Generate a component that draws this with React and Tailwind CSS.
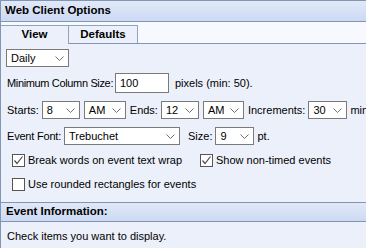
import React from "react";

function Chevron() {
    return (
        <svg width="9" height="5" viewBox="0 0 9 5" className="shrink-0">
            <polyline points="0.5,0.5 4.5,4.5 8.5,0.5" fill="none" stroke="#707070" strokeWidth="1" />
        </svg>
    );
}

function Select({ value, w }) {
    return (
        <div className={`flex items-center justify-between h-[18px] border border-[#7a7a7a] bg-white pl-[4px] pr-[4px] shrink-0 ${w}`}>
            <span>{value}</span>
            <Chevron />
        </div>
    );
}

function Check({ checked, label }) {
    return (
        <div className="flex items-center">
            <div className="w-[13px] h-[13px] border border-[#555] bg-white flex items-center justify-center shrink-0">
                {checked && (
                    <svg width="11" height="11" viewBox="0 0 11 11">
                        <polyline points="1.5,5.5 4,8.5 9.5,1.5" fill="none" stroke="#4a4a4a" strokeWidth="1.2" />
                    </svg>
                )}
            </div>
            <span className="ml-[3px] whitespace-nowrap">{label}</span>
        </div>
    );
}

export default function App() {
    return (
        <div className="w-[366px] h-[248px] overflow-hidden bg-[#ecf0fb] border-l border-[#8196b5] font-['Liberation_Sans',Arial,sans-serif] text-[11px] text-black leading-none">
            {/* titre */}
            <div className="h-[22px] border-y border-[#8196b5] bg-gradient-to-b from-[#e1e9f8] to-[#ccd9f3] flex items-center pl-[4px] font-bold text-[11.5px]">
                Web Client Options
            </div>
            {/* onglets */}
            <div className="h-[22px] bg-[#f7f9fe] flex items-end relative">
                <div className="absolute left-0 right-0 bottom-0 border-b border-[#8196b5]" />
                <div className="relative z-10 h-[19px] w-[68px] bg-[#ecf0fb] border-t border-r border-[#8ea3c1] flex items-center justify-center font-bold text-[11.5px]">
                    View
                </div>
                <div className="h-[19px] w-[69px] bg-[#ecf0fb] border-t border-r border-b border-[#8ea3c1] flex items-center justify-center font-bold text-[11.5px]">
                    Defaults
                </div>
            </div>
            {/* contenu */}
            <div className="pl-[5px] pt-[5px] pb-[11px] whitespace-nowrap">
                <Select value="Daily" w="w-[63px]" />
                <div className="mt-[6px] h-[20px] flex items-center pl-[1px]">
                    <span className="w-[108px] tracking-[-0.35px]">Minimum Column Size:</span>
                    <div className="w-[54px] h-[20px] border border-[#7a7a7a] bg-white flex items-center pl-[4px]">100</div>
                    <span className="ml-[6px]">pixels (min: 50).</span>
                </div>
                <div className="mt-[8px] h-[18px] flex items-center pl-[1px]">
                    <span>Starts:</span>
                    <div className="ml-[3px]"><Select value="8" w="w-[38px]" /></div>
                    <div className="ml-[4px]"><Select value="AM" w="w-[42px]" /></div>
                    <span className="ml-[4px]">Ends:</span>
                    <div className="ml-[3px]"><Select value="12" w="w-[38px]" /></div>
                    <div className="ml-[4px]"><Select value="AM" w="w-[41px]" /></div>
                    <span className="ml-[4px]">Increments:</span>
                    <div className="ml-[3px]"><Select value="30" w="w-[39px]" /></div>
                    <span className="ml-[3px]">mins.</span>
                </div>
                <div className="mt-[8px] h-[18px] flex items-center pl-[1px]">
                    <span className="w-[57px] tracking-[-0.2px]">Event Font:</span>
                    <Select value="Trebuchet" w="w-[116px]" />
                    <span className="ml-[8px]">Size:</span>
                    <div className="ml-[3px]"><Select value="9" w="w-[39px]" /></div>
                    <span className="ml-[3px]">pt.</span>
                </div>
                <div className="mt-[8px] h-[14px] flex items-center pl-[6px]">
                    <div className="w-[188px]">
                        <Check checked label="Break words on event text wrap" />
                    </div>
                    <Check checked label="Show non-timed events" />
                </div>
                <div className="mt-[10px] h-[14px] flex items-center pl-[6px]">
                    <Check label="Use rounded rectangles for events" />
                </div>
            </div>
            {/* section info */}
            <div className="h-[20px] border-y border-[#8196b5] bg-gradient-to-b from-[#e1e9f8] to-[#ccd9f3] flex items-center pl-[5px] font-bold text-[11.5px]">
                Event Information:
            </div>
            <div className="pl-[6px] pt-[6px] h-[22px] flex items-center">
                Check items you want to display.
            </div>
        </div>
    );
}
